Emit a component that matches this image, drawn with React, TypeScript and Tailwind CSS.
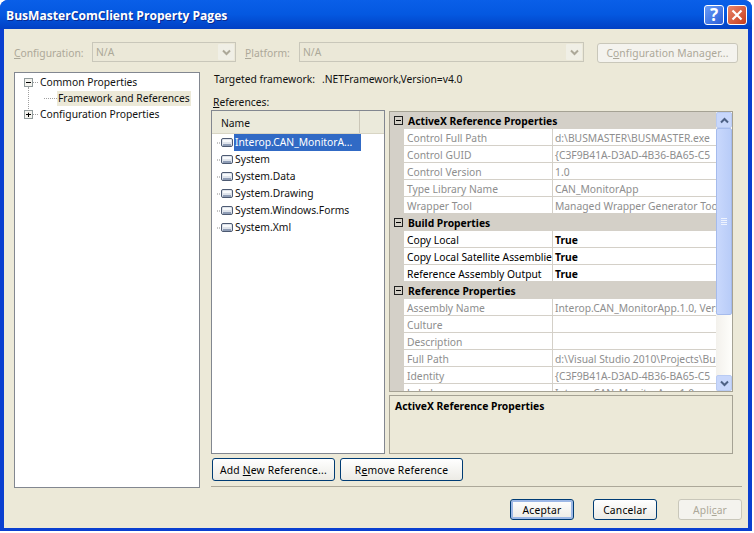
import React from "react";

const font = { fontFamily: '"Noto Sans", Tahoma, sans-serif' };

function XpButton({ children, className = "", disabled = false, def = false }: { children: React.ReactNode; className?: string; disabled?: boolean; def?: boolean }) {
  if (disabled) {
    return <div className={`flex items-center justify-center whitespace-nowrap rounded-[3px] border border-[#c9c7ba] bg-[#f4f3ee] tracking-[0.1px] text-[#aca899] ${className}`}><span>{children}</span></div>;
  }
  return (
    <div className={`flex items-center justify-center whitespace-nowrap rounded-[3px] border border-[#003c74] bg-gradient-to-b from-white to-[#ecebe5] tracking-[0.2px] text-black ${def ? "shadow-[inset_0_0_0_2px_#9db8e6]" : ""} ${className}`}>
      <span>{children}</span>
    </div>
  );
}

function Chevron({ color = "#aca899", up = false }: { color?: string; up?: boolean }) {
  return (
    <svg width="9" height="7" viewBox="0 0 9 7">
      <path d={up ? "M1 5.5 L4.5 2 L8 5.5" : "M1 1.5 L4.5 5 L8 1.5"} fill="none" stroke={color} strokeWidth="2" />
    </svg>
  );
}

function Combo({ className = "", text }: { className?: string; text: string }) {
  return (
    <div className={`flex h-[20px] items-center justify-between border border-[#c9c7ba] bg-[#ebe8d8] pl-[3px] pr-[1px] text-[#aca899] ${className}`}>
      <span>{text}</span>
      <div className="flex h-[16px] w-[16px] items-center justify-center rounded-[1px] bg-[#f0efe6]">
        <Chevron />
      </div>
    </div>
  );
}

function Expander({ open }: { open: boolean }) {
  return (
    <svg width="9" height="9" viewBox="0 0 9 9" className="shrink-0">
      <rect x="0.5" y="0.5" width="8" height="8" fill="#f4f3ee" stroke="#919b9c" />
      <path d={open ? "M2 4.5 H7" : "M2 4.5 H7 M4.5 2 V7"} stroke="#000" fill="none" />
    </svg>
  );
}

function RefIcon() {
  return (
    <svg width="17" height="13" viewBox="0 0 17 13" className="shrink-0">
      <path d="M0 7 H4" stroke="#8a8a8a" strokeDasharray="1 1" />
      <rect x="4.5" y="2.5" width="11" height="8" rx="1.5" fill="#dfe4ec" stroke="#4d5a72" />
      <rect x="6" y="4" width="8" height="2" fill="#f8fafc" />
      <rect x="6" y="8" width="8" height="2" fill="#8f9db6" />
    </svg>
  );
}

function SectionBox() {
  return (
    <svg width="9" height="9" viewBox="0 0 9 9">
      <rect x="0.5" y="0.5" width="8" height="8" fill="#d4d0c8" stroke="#222" />
      <path d="M2 4.5 H7" stroke="#000" />
    </svg>
  );
}

function Section({ title }: { title: string }) {
  return (
    <div className="flex h-[17px] shrink-0 items-center bg-[#d4d0c8] pl-[4px] font-bold text-black">
      <span className="flex h-[9px] w-[9px] items-center"><SectionBox /></span>
      <span className="ml-[5px] pt-[2px]">{title}</span>
    </div>
  );
}

function Row({ name, value, active = false }: { name: string; value: string; active?: boolean }) {
  return (
    <div className="flex h-[17px] shrink-0 bg-[#d4d0c8] pl-[14px]">
      <div className={`flex w-[149px] items-center overflow-hidden whitespace-nowrap border-b border-r border-[#d4d0c8] bg-white pl-[3px] pt-[2px] ${active ? "text-black" : "text-[#8e8e8e]"}`}>{name}</div>
      <div className={`flex flex-1 items-center overflow-hidden whitespace-nowrap border-b border-[#d4d0c8] bg-white pl-[2px] pt-[2px] ${active ? "font-bold text-black" : "text-[#8e8e8e]"}`}>{value}</div>
    </div>
  );
}

const refs = ["System", "System.Data", "System.Drawing", "System.Windows.Forms", "System.Xml"];

export default function App() {
  return (
    <div className="h-[533px] w-[754px] overflow-hidden bg-white text-[10.3px] leading-none" style={font}>
      <div className="flex h-[531px] w-[752px] flex-col rounded-t-[8px] bg-[#0a3fd0]">
        <div className="flex h-[29px] shrink-0 items-center justify-between rounded-t-[8px] bg-gradient-to-b from-[#0a5fe8] via-[#0458e0] to-[#0240c4] pl-[6px] pr-[5px]">
          <span className="pt-[3px] text-[12.1px] font-bold text-white [text-shadow:1px_1px_0_#0a2a90]" style={{ fontFamily: '"Open Sans", sans-serif' }}>BusMasterComClient Property Pages</span>
          <div className="flex gap-[3px]">
            <div className="flex h-[20px] w-[20px] items-center justify-center rounded-[3px] border border-white bg-gradient-to-br from-[#6a9cf6] to-[#2a5cd8] text-[17px] font-bold text-white">?</div>
            <div className="flex h-[20px] w-[20px] items-center justify-center rounded-[3px] border border-white bg-gradient-to-br from-[#e8856a] to-[#c63a16]">
              <svg width="12" height="12" viewBox="0 0 12 12"><path d="M1.5 1.5 L10.5 10.5 M10.5 1.5 L1.5 10.5" stroke="#fff" strokeWidth="2.2" /></svg>
            </div>
          </div>
        </div>

        <div className="mx-[4px] mb-[3px] flex flex-1 flex-col bg-[#ece9d8]">
          {/* toolbar */}
          <div className="mt-[13px] flex h-[20px] shrink-0 items-center pl-[10px] text-[#aca899]">
            <span className="w-[78px] pt-[2px]"><u>C</u>onfiguration:</span>
            <Combo text="N/A" className="w-[144px]" />
            <span className="ml-[9px] w-[54px] pt-[2px]"><u>P</u>latform:</span>
            <Combo text="N/A" className="w-[285px]" />
            <XpButton disabled className="ml-[13px] mt-[1px] h-[20px] w-[141px] pt-[1px]">C<u>o</u>nfiguration Manager...</XpButton>
          </div>

          <div className="mt-[10px] flex h-[416px] shrink-0 pl-[10px]">
            {/* tree */}
            <div className="relative h-[416px] w-[186px] shrink-0 border border-[#828790] bg-white pl-[9px] pt-[1px]">
              <div className="absolute left-[13px] top-[14px] h-[26px] border-l border-dotted border-[#a0a0a0]" />
              <div className="flex h-[16px] items-center whitespace-nowrap">
                <Expander open />
                <span className="w-[5px] border-t border-dotted border-[#a0a0a0]" />
                <span className="ml-[2px] text-[#111]">Common Properties</span>
              </div>
              <div className="flex h-[16px] items-center whitespace-nowrap pl-[20px]">
                <span className="w-[13px] border-t border-dotted border-[#a0a0a0]" />
                <span className="flex h-[15px] w-[134px] items-center bg-[#ece9d8] pl-[1px] text-[#111]">Framework and References</span>
              </div>
              <div className="flex h-[16px] items-center whitespace-nowrap">
                <Expander open={false} />
                <span className="w-[5px] border-t border-dotted border-[#a0a0a0]" />
                <span className="ml-[2px] text-[#111]">Configuration Properties</span>
              </div>
            </div>

            {/* right side */}
            <div className="ml-[11px] flex flex-1 flex-col">
              <div className="ml-[3px] flex h-[14px] items-center text-[#111]">
                <span>Targeted framework:</span>
                <span className="ml-[7px]">.NETFramework,Version=v4.0</span>
              </div>
              <div className="ml-[2px] mt-[9px] flex h-[14px] items-center pt-[2px] text-[#111]"><span><u>R</u>eferences:</span></div>
              <div className="mt-[2px] flex h-[344px] shrink-0">
                {/* list */}
                <div className="h-[344px] w-[174px] shrink-0 border border-[#828790] bg-white">
                  <div className="flex h-[23px] border-b border-[#d8d5c4] bg-[#ebeadb] text-[#111]">
                    <div className="flex w-[148px] items-center border-r border-[#cbc7b8] pl-[9px] pt-[2px]">Name</div>
                  </div>
                  <div className="pl-[5px]">
                    <div className="flex h-[17px] items-center">
                      <RefIcon />
                      <span className="flex h-[17px] w-[127px] items-center bg-[#316ac5] pl-[1px] text-white">Interop.CAN_MonitorA...</span>
                    </div>
                    {refs.map((r) => (
                      <div key={r} className="flex h-[17px] items-center text-[#111]">
                        <RefIcon />
                        <span className="pl-[1px]">{r}</span>
                      </div>
                    ))}
                  </div>
                </div>

                {/* grid + description */}
                <div className="ml-[4px] flex w-[344px] flex-col pt-[1px]">
                  <div className="flex h-[281px] shrink-0 border border-[#a5a294]">
                    <div className="flex flex-1 flex-col overflow-hidden">
                      <Section title="ActiveX Reference Properties" />
                      <Row name="Control Full Path" value="d:\BUSMASTER\BUSMASTER.exe" />
                      <Row name="Control GUID" value="{C3F9B41A-D3AD-4B36-BA65-C5" />
                      <Row name="Control Version" value="1.0" />
                      <Row name="Type Library Name" value="CAN_MonitorApp" />
                      <Row name="Wrapper Tool" value="Managed Wrapper Generator Tool" />
                      <Section title="Build Properties" />
                      <Row active name="Copy Local" value="True" />
                      <Row active name="Copy Local Satellite Assemblies" value="True" />
                      <Row active name="Reference Assembly Output" value="True" />
                      <Section title="Reference Properties" />
                      <Row name="Assembly Name" value="Interop.CAN_MonitorApp.1.0, Version" />
                      <Row name="Culture" value="" />
                      <Row name="Description" value="" />
                      <Row name="Full Path" value="d:\Visual Studio 2010\Projects\Bus" />
                      <Row name="Identity" value="{C3F9B41A-D3AD-4B36-BA65-C5" />
                      <Row name="Label" value="Interop.CAN_MonitorApp.1.0" />
                    </div>
                    {/* scrollbar */}
                    <div className="flex w-[16px] shrink-0 flex-col bg-gradient-to-r from-[#f3f1ec] to-[#fefefb]">
                      <div className="flex h-[16px] items-center justify-center rounded-[2px] border border-[#b9cbf3] bg-[#c8d7fb]"><Chevron color="#4d6185" up /></div>
                      <div className="flex h-[187px] items-center justify-center rounded-[2px] border border-[#a5bbec] bg-gradient-to-r from-[#c9d8fc] to-[#b8ccf8]">
                        <div className="flex w-[6px] flex-col gap-[1px]">
                          <div className="h-px bg-[#eef3fe]" /><div className="h-px bg-[#eef3fe]" /><div className="h-px bg-[#eef3fe]" /><div className="h-px bg-[#eef3fe]" />
                        </div>
                      </div>
                      <div className="flex-1" />
                      <div className="flex h-[16px] items-center justify-center rounded-[2px] border border-[#b9cbf3] bg-[#c8d7fb]"><Chevron color="#4d6185" /></div>
                    </div>
                  </div>
                  <div className="mt-[3px] h-[59px] border border-[#a5a294] pl-[5px] pt-[5px] font-bold text-black">ActiveX Reference Properties</div>
                </div>
              </div>

              <div className="mt-[4px] flex shrink-0 pl-[1px]">
                <XpButton className="h-[23px] w-[123px] pt-[1px]">Add <u>N</u>ew Reference...</XpButton>
                <XpButton className="ml-[5px] h-[23px] w-[123px] pt-[1px]">R<u>e</u>move Reference</XpButton>
              </div>
              <div className="mr-[6px] mt-[5px] h-[2px] border-t border-[#aca899]" />
            </div>
          </div>

          {/* bottom buttons */}
          <div className="mt-[11px] flex justify-end pr-[6px]">
            <XpButton def className="h-[21px] w-[64px] pt-[1px]">Aceptar</XpButton>
            <XpButton className="ml-[19px] h-[21px] w-[64px] pt-[1px]">Cancelar</XpButton>
            <XpButton disabled className="ml-[21px] h-[21px] w-[64px] pt-[1px]">Apli<u>c</u>ar</XpButton>
          </div>
        </div>
      </div>
    </div>
  );
}
